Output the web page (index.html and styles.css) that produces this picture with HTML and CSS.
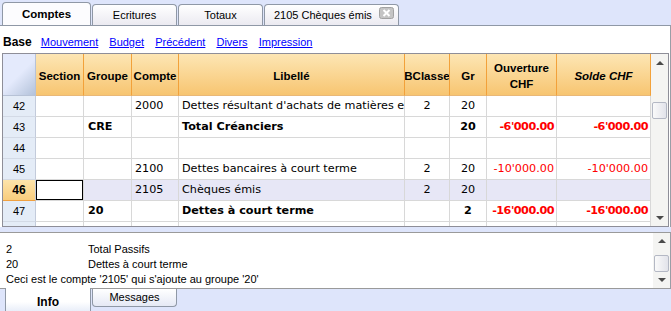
FILE: index.html
```html
<!DOCTYPE html>
<html lang="fr">
    <head>
        <meta charset="utf-8">
        <meta name="viewport" content="width=device-width, initial-scale=1.0">
        <title>Comptes</title>
        <link rel="stylesheet" href="styles.css">
    </head>
    <body>
        <div class="tabs">
            <div class="tab on">Comptes</div>
            <div class="tab">Ecritures</div>
            <div class="tab">Totaux</div>
            <div class="tab doc">2105 Chèques émis
                <svg class="close" width="15" height="12" viewBox="0 0 15 12">
                    <rect x="0.5" y="0.5" width="14" height="11" rx="2" fill="#c4c4c4" stroke="#a2a2a2"/>
                    <path d="M4.5 3 L10.5 9 M10.5 3 L4.5 9" stroke="#fff" stroke-width="2"/>
                </svg>
            </div>
        </div>

        <div class="top">
            <div class="views">
                <b>Base</b>
                <a href="#">Mouvement</a>
                <a href="#">Budget</a>
                <a href="#">Précédent</a>
                <a href="#">Divers</a>
                <a href="#">Impression</a>
            </div>
            <div class="grid">
                <div class="sheet">
                    <div class="row head">
                        <div class="c n corner"></div>
                        <div class="c">Section</div>
                        <div class="c">Groupe</div>
                        <div class="c">Compte</div>
                        <div class="c">Libellé</div>
                        <div class="c">BClasse</div>
                        <div class="c">Gr</div>
                        <div class="c">Ouverture<br>CHF</div>
                        <div class="c"><i>Solde</i>&nbsp;<i>CHF</i></div>
                    </div>
                    <div class="row">
                        <div class="c n">42</div>
                        <div class="c"></div>
                        <div class="c"></div>
                        <div class="c">2000</div>
                        <div class="c">Dettes résultant d'achats de matières et de services</div>
                        <div class="c mid">2</div>
                        <div class="c mid">20</div>
                        <div class="c amt"></div>
                        <div class="c amt"></div>
                    </div>
                    <div class="row tot">
                        <div class="c n">43</div>
                        <div class="c"></div>
                        <div class="c grp">CRE</div>
                        <div class="c"></div>
                        <div class="c">Total Créanciers</div>
                        <div class="c mid"></div>
                        <div class="c mid">20</div>
                        <div class="c amt">-6'000.00</div>
                        <div class="c amt">-6'000.00</div>
                    </div>
                    <div class="row">
                        <div class="c n">44</div>
                        <div class="c"></div>
                        <div class="c"></div>
                        <div class="c"></div>
                        <div class="c"></div>
                        <div class="c"></div>
                        <div class="c"></div>
                        <div class="c"></div>
                        <div class="c"></div>
                    </div>
                    <div class="row">
                        <div class="c n">45</div>
                        <div class="c"></div>
                        <div class="c"></div>
                        <div class="c">2100</div>
                        <div class="c">Dettes bancaires à court terme</div>
                        <div class="c mid">2</div>
                        <div class="c mid">20</div>
                        <div class="c amt">-10'000.00</div>
                        <div class="c amt">-10'000.00</div>
                    </div>
                    <div class="row sel">
                        <div class="c n">46</div>
                        <div class="c cur"></div>
                        <div class="c"></div>
                        <div class="c">2105</div>
                        <div class="c">Chèques émis</div>
                        <div class="c mid">2</div>
                        <div class="c mid">20</div>
                        <div class="c amt"></div>
                        <div class="c amt"></div>
                    </div>
                    <div class="row tot">
                        <div class="c n">47</div>
                        <div class="c"></div>
                        <div class="c grp">20</div>
                        <div class="c"></div>
                        <div class="c">Dettes à court terme</div>
                        <div class="c mid"></div>
                        <div class="c mid">2</div>
                        <div class="c amt">-16'000.00</div>
                        <div class="c amt">-16'000.00</div>
                    </div>
                    <div class="row">
                        <div class="c n"></div>
                        <div class="c"></div>
                        <div class="c"></div>
                        <div class="c"></div>
                        <div class="c"></div>
                        <div class="c"></div>
                        <div class="c"></div>
                        <div class="c"></div>
                        <div class="c"></div>
                    </div>
                </div>
                <div class="vscroll">
                    <div class="btn up"></div>
                    <div class="track"><div class="thumb big"></div></div>
                    <div class="btn down"></div>
                </div>
            </div>
        </div>

        <div class="info">
            <div class="lines">
                <div><span class="k">2</span>Total Passifs</div>
                <div><span class="k">20</span>Dettes à court terme</div>
                <div>Ceci est le compte '2105' qui s'ajoute au groupe '20'</div>
            </div>
            <div class="vscroll">
                <div class="btn up"></div>
                <div class="track"><div class="thumb small"></div></div>
                <div class="btn down"></div>
            </div>
        </div>

        <div class="btabs">
            <div class="btab on">Info</div>
            <div class="btab">Messages</div>
        </div>
    </body>
</html>
```

FILE: styles.css
```css
body {
    margin: 0;
    width: 671px;
    height: 311px;
    overflow: hidden;
    background-color: #dee5fb;
    font-family: "Liberation Sans", Arial, sans-serif;
    font-size: 11px;
    color: #000;
}

/* onglets du haut */
.tabs {
    display: flex;
    align-items: flex-end;
    height: 25px;
    padding-left: 2px;
}
.tab {
    box-sizing: border-box;
    width: 85px;
    height: 21px;
    margin-right: 1px;
    border: 1px solid #8f98a6;
    border-bottom: none;
    border-radius: 4px 4px 0 0;
    background: linear-gradient(#ffffff, #ebeaf1);
    text-align: center;
    line-height: 21px;
}
.tab.on {
    width: 89px;
    height: 23px;
    background: #fcfcfe;
    font-weight: bold;
    font-size: 11.5px;
    line-height: 23px;
}
.tab.doc {
    width: 135px;
    display: flex;
    align-items: center;
    text-align: left;
    padding-left: 9px;
}
.close {
    margin-left: auto;
    margin-right: 4px;
    margin-top: -4px;
}

/* panneau principal */
.top {
    background: #fff;
    border-top: 1px solid #8f98a6;
    border-right: 1px solid #9a9ea6;
}
.views {
    height: 27px;
    box-sizing: border-box;
    padding: 9px 0 0 3px;
    line-height: 14px;
}
.views b {
    font-size: 12px;
    margin-right: 6px;
}
.views a {
    color: #0000ff;
    margin-right: 8px;
}

.grid {
    display: flex;
    box-sizing: border-box;
    width: 667px;
    height: 174px;
    margin-left: 2px;
    border: 1px solid #8e8e98;
    overflow: hidden;
}
.sheet {
    width: 648px;
}
.row {
    display: grid;
    grid-template-columns: 33px 48px 48px 47px 226px 45px 37px 70px 94px;
    height: 21px;
    font-family: "DejaVu Sans", Verdana, sans-serif;
    font-size: 11.2px;
}
.c {
    box-sizing: border-box;
    border-right: 1px solid #d8d8d8;
    border-bottom: 1px solid #d8d8d8;
    padding: 0 3px;
    line-height: 20px;
    white-space: nowrap;
    overflow: hidden;
}
.c.n {
    background: #e4ecf7;
    border-right-color: #c3cbdb;
    border-bottom-color: #d3dae6;
    text-align: center;
    font-family: "Liberation Sans", Arial, sans-serif;
    font-size: 11px;
}
.mid {
    text-align: center;
}
.amt {
    text-align: right;
    color: #ff0000;
    padding-right: 2px;
}
.grp {
    padding-left: 4px;
}
.tot .c {
    font-weight: bold;
}
.tot .c.amt {
    letter-spacing: -0.5px;
}
.tot .c.n {
    font-weight: normal;
}
.sel .c {
    background: #e7e7f6;
}
.sel .c.n {
    background: linear-gradient(#fde4ab, #f9cd7d);
    border-bottom-color: #f0a040;
    font-weight: bold;
    font-size: 12px;
}
.sel .c.cur {
    background: #fff;
    box-shadow: inset 0 0 0 1px #000;
}

.head {
    height: 42px;
    font-family: "Liberation Sans", Arial, sans-serif;
    font-size: 11.5px;
}
.head .c {
    display: flex;
    align-items: center;
    justify-content: center;
    text-align: center;
    padding: 2px 0 0 0;
    line-height: 16px;
    font-weight: bold;
    background: linear-gradient(#fde6b4, #f7c571);
    border-right-color: #f2a13a;
    border-bottom-color: #e9b878;
}
.head .c.corner {
    background: linear-gradient(135deg, #e4eafc 50%, #b3c2da);
    border-right-color: #b7c2d6;
    border-bottom-color: #b7c2d6;
}

/* barres de défilement */
.vscroll {
    display: flex;
    flex-direction: column;
    width: 17px;
    background: #f4f4f2;
}
.btn {
    height: 17px;
    display: flex;
    align-items: center;
    justify-content: center;
}
.btn::after {
    content: "";
    border-left: 4px solid transparent;
    border-right: 4px solid transparent;
}
.up::after {
    border-bottom: 4px solid #4a4a4a;
}
.down::after {
    border-top: 4px solid #4a4a4a;
}
.track {
    flex: 1;
}
.thumb {
    box-sizing: border-box;
    width: 15px;
    height: 17px;
    margin-left: 1px;
    border: 1px solid #b4b8c4;
    border-radius: 2px;
    background: linear-gradient(90deg, #fafafa, #e2e3ea);
}
.thumb.big {
    margin-top: 31px;
}
.thumb.small {
    margin-top: 5px;
}

/* zone d'info */
.info {
    display: flex;
    height: 57px;
    box-sizing: border-box;
    margin-top: 5px;
    background: #fff;
    border-top: 1px solid #9a9a9a;
    border-bottom: 1px solid #9a9a9a;
    border-right: 1px solid #9a9ea6;
}
.lines {
    flex: 1;
    padding: 9px 0 0 6px;
    line-height: 15px;
    white-space: nowrap;
}
.k {
    display: inline-block;
    width: 82px;
}

/* onglets du bas */
.btabs {
    display: flex;
    padding-left: 5px;
}
.btab {
    box-sizing: border-box;
    width: 85px;
    height: 18px;
    margin-left: 1px;
    border: 1px solid #8f98a6;
    border-top: none;
    border-radius: 0 0 4px 4px;
    background: linear-gradient(#ffffff, #e5e9f5);
    text-align: center;
    line-height: 17px;
}
.btab.on {
    width: 86px;
    height: 23px;
    margin: -1px 0 0 0;
    border-radius: 0;
    border-bottom: none;
    background: linear-gradient(#ffffff 60%, #e9eef9);
    font-weight: bold;
    font-size: 12px;
    line-height: 18px;
    padding-top: 5px;
}
```
